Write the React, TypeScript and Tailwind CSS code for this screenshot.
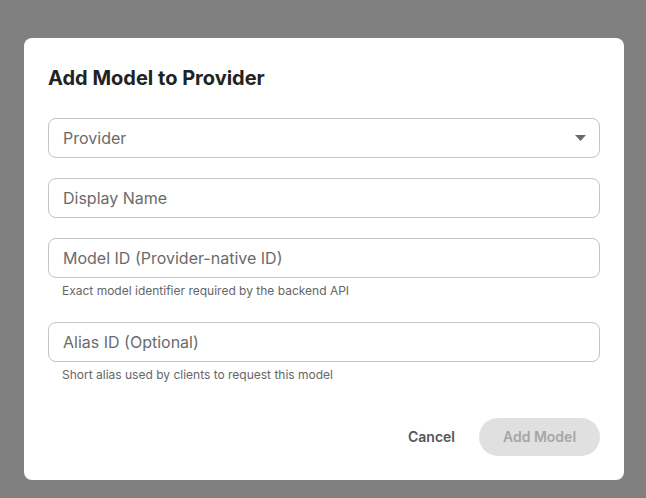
const fieldClass =
  'h-10 w-full rounded-lg border border-[#c4c4c4] bg-white px-[14px] text-base text-[#222] placeholder:text-[#6b6b6b] outline-none';

const Field = ({ placeholder, helper }: { placeholder: string; helper?: string }) => (
  <div className="flex flex-col">
    <input className={fieldClass} placeholder={placeholder} />
    {helper && (
      <p className="mt-[3px] mb-px px-[14px] text-xs leading-5 text-[#666]">{helper}</p>
    )}
  </div>
);

const App = () => {
  return (
    <div
      className="flex min-h-[498px] bg-[#808080] pt-[38px] pl-6"
      style={{ fontFamily: 'Inter, "Noto Sans", sans-serif' }}
    >
      <div className="flex h-[442px] w-[600px] flex-col rounded-lg bg-white px-6 pt-6 pb-6">
        {/* Title */}
        <h2 className="h-8 text-xl leading-8 font-bold text-[#222]">Add Model to Provider</h2>

        {/* Fields */}
        <div className="mt-6 flex flex-col gap-5">
          <div className="relative flex h-10 items-center rounded-lg border border-[#c4c4c4] px-[14px]">
            <span className="text-base text-[#6b6b6b]">Provider</span>
            <svg
              className="absolute right-[13px] top-[16px]"
              width="11"
              height="6"
              viewBox="0 0 11 6"
            >
              <path d="M0 0 L11 0 L5.5 6 Z" fill="#6b6b6b" />
            </svg>
          </div>
          <Field placeholder="Display Name" />
          <Field placeholder="Model ID (Provider-native ID)" helper="Exact model identifier required by the backend API" />
          <Field placeholder="Alias ID (Optional)" helper="Short alias used by clients to request this model" />
        </div>

        {/* Actions */}
        <div className="mt-auto flex items-center justify-end gap-2">
          <button className="h-[38px] rounded-full px-4 text-sm font-semibold text-[#555]">Cancel</button>
          <button
            disabled
            className="h-[38px] w-[121px] rounded-full bg-[#e0e0e0] text-sm font-semibold text-[#a6a6a6]"
          >
            Add Model
          </button>
        </div>
      </div>
    </div>
  );
};

export default App;
